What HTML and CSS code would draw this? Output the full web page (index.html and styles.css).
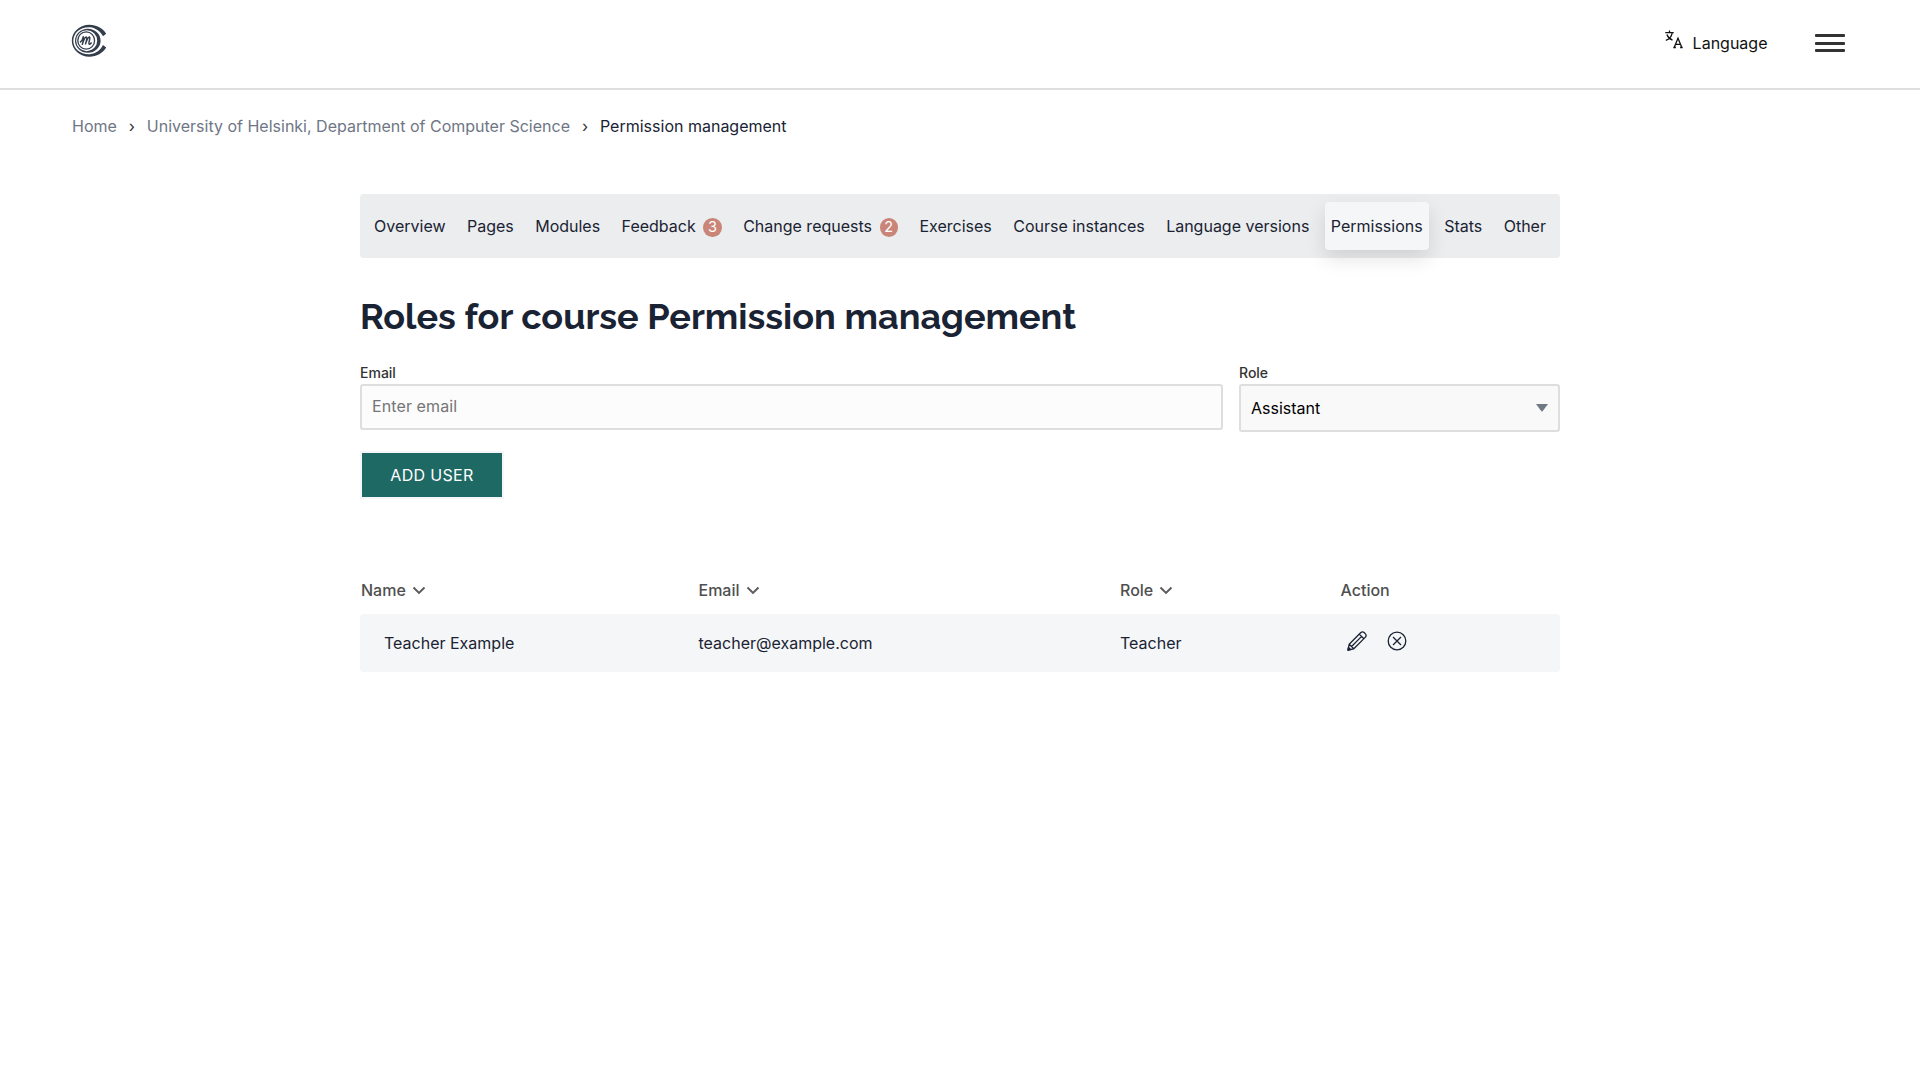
FILE: index.html
```
<!DOCTYPE html>
<html lang="en">
<head>
<meta charset="utf-8">
<title>Permission management</title>
<link rel="stylesheet" href="styles.css">
</head>
<body>
<header class="topbar">
  <a class="logo" aria-label="Home">
    <svg width="36" height="34" viewBox="0 0 36 34" fill="none" stroke="#333d4c">
      <path stroke="none" fill="#333d4c" d="M35.200 9.800C32 4.200 25.500 .7 18.500 .7C8.800 .7 .8 7.800 .8 16.700S8.800 32.700 18.500 32.700c7 0 13.500-3.500 16.700-9.100l-3.200-2.600C29.600 25.900 25 29.500 19 30.200C10 30.900 2.300 25 2.300 16.700S10 2.500 19 3.200c6 .6 10.600 4.300 13 9.100z"/>
      <path stroke="none" fill="#333d4c" fill-rule="evenodd" d="M16.800 4.700a12.800 12 0 1 0 0 24a12.800 12 0 0 0 0-24zM15.700 6.200a10.500 10.500 0 1 1 0 21a10.500 10.500 0 0 1 0-21z"/>
      <ellipse cx="15.200" cy="16.500" rx="8.400" ry="8.700" stroke-width="1.300"/>
      <path d="M9 18.400c1.500-1 2.800-3 3.300-5.500c1.300.8-.2 5-1.100 8c1.100-3.600 2.500-7.500 4-8c1.600.4-.1 5-.8 7.500c1-3.400 2.500-7.200 4-7.500c1.700.6-1.500 6.400-.2 7.200c.8.400 1.700-.6 2.400-1.600" stroke-width="1.500"/>
    </svg>
  </a>
  <div class="tools">
    <button class="language">
      <svg width="18" height="19" viewBox="0 0 18 19" fill="none" stroke="#111" stroke-width="1.300">
        <path d="M.3 2.700h8.400M4.500 .5v2.200M1.900 4.500c1 2.800 3 4.700 5.600 5.700M7.200 3c-.6 3.500-2.900 6.200-6.400 7.300"/>
        <path d="M9.300 17.300l3.700-9l3.700 9M10.500 14.300h5M8.300 17.500h2.600M15.100 17.500h2.600"/>
      </svg>
      <span>Language</span>
    </button>
    <button class="menu" aria-label="Menu"><i></i><i></i><i></i></button>
  </div>
</header>
<nav class="crumbs">
  <a>Home</a><span class="sep">›</span><a>University of Helsinki, Department of Computer Science</a><span class="sep">›</span><span class="current">Permission management</span>
</nav>
<main class="content">
  <nav class="tabs">
    <a>Overview</a><a>Pages</a><a>Modules</a>
    <a>Feedback<span class="badge">3</span></a>
    <a>Change requests<span class="badge">2</span></a>
    <a>Exercises</a><a>Course instances</a><a>Language versions</a>
    <a class="active">Permissions</a><a>Stats</a><a>Other</a>
  </nav>
  <h1>Roles for course Permission management</h1>
  <form class="form">
    <label class="field email"><span>Email</span><input type="email" placeholder="Enter email"></label>
    <div class="field role"><span>Role</span>
      <div class="select">Assistant
        <svg width="12" height="8" viewBox="0 0 12 8"><path d="M0 0h12L6.600 7.200q-.6.600-1.200 0z" fill="#707885"/></svg>
      </div>
    </div>
  </form>
  <button class="add">ADD USER</button>
  <section class="table">
    <div class="row head">
      <span>Name<svg class="chev" width="14" height="9" viewBox="0 0 14 9"><path d="M1.500 1.500L7 6.900l5.500-5.400"/></svg></span>
      <span>Email<svg class="chev" width="14" height="9" viewBox="0 0 14 9"><path d="M1.500 1.500L7 6.900l5.500-5.400"/></svg></span>
      <span>Role<svg class="chev" width="14" height="9" viewBox="0 0 14 9"><path d="M1.500 1.500L7 6.900l5.500-5.400"/></svg></span>
      <span>Action</span>
    </div>
    <div class="row item">
      <span class="name">Teacher Example</span>
      <span>teacher@example.com</span>
      <span>Teacher</span>
      <span class="actions">
        <svg width="20" height="20" viewBox="0 0 20 20" fill="none" stroke="#1a2333" stroke-width="1.300" stroke-linejoin="round">
          <path d="M1 19l1.200-5.800L13.600 1.800a2.700 2.700 0 0 1 3.800 0l.8.800a2.700 2.700 0 0 1 0 3.800L6.800 17.800zM2.200 13.200l4.600 4.600M12.300 3.100l4.600 4.600M4.600 15.500L14.600 5.400"/>
          <path d="M1 19l.5-2.500l2 2z" fill="#1a2333"/>
        </svg>
        <svg width="20" height="20" viewBox="0 0 20 20" fill="none" stroke="#1a2333" stroke-width="1.300">
          <circle cx="10" cy="10" r="8.800"/><path d="M6 6l8 8M14 6l-8 8"/>
        </svg>
      </span>
    </div>
  </section>
</main>
</body>
</html>
```
FILE: styles.css
```
* { box-sizing: border-box; }
body { margin: 0; background: #fff; color: #1a2333; font: 16px/24px Inter, "Liberation Sans", sans-serif; }
button { font: inherit; border: 0; background: none; padding: 0; color: inherit; }
svg { display: block; flex: none; }

.topbar { height: 90px; border-bottom: 2px solid #dedede; padding: 0 75px 0 71px; display: flex; justify-content: space-between; align-items: flex-start; }
.logo { padding-top: 24px; }
.tools { display: flex; align-items: flex-start; gap: 47.500px; padding-top: 31px; }
.language { display: flex; gap: 9.500px; color: #111; }
.language svg { margin-top: -1px; }
.menu { width: 30px; height: 18px; display: flex; flex-direction: column; justify-content: space-between; margin-top: 3px; }
.menu i { height: 3px; background: #333; border-radius: 1px; }

.crumbs { display: flex; padding: 24px 72px 0; height: 104px; color: #6f7685; }
.sep { width: 30px; text-align: center; color: #333; }
.current { color: #1a2333; }

.content { width: 1200px; margin: 0 auto; }
.tabs { height: 64px; padding: 8px; border-radius: 4px; background: #ebedee; display: flex; justify-content: space-between; }
.tabs a { display: flex; align-items: center; padding: 0 6px; border-radius: 4px; white-space: nowrap; }
.tabs .active { background: #f5f6f7; box-shadow: 0 8px 20px rgba(0, 0, 0, .12); }
.badge { width: 18.500px; height: 19px; margin: 2px 0 0 7.500px; border-radius: 50%; background: #c98578; color: #fff; font-size: 14.500px; line-height: 18px; text-align: center; }

h1 { margin: 35px 0 0; font: 700 36px/46px Raleway, Lato, sans-serif; white-space: nowrap; }

.form { display: flex; gap: 16px; margin-top: 23px; }
.field { display: flex; flex-direction: column; font-size: 14px; line-height: 21px; font-weight: 500; color: #333; }
.field > span { margin-bottom: 1px; }
.email { width: 863px; }
.role { flex: 1; }
.field input, .select { border: 2px solid #dedede; border-radius: 3px; font: 16px/24px Inter, "Liberation Sans", sans-serif; }
.field input { height: 46px; padding: 0 10px 2px; background: #fcfcfc; letter-spacing: .1px; }
.field input::placeholder { color: #757575; opacity: 1; }
.select { height: 48px; padding: 0 10px; background: #f9f9f9; color: #000; display: flex; align-items: center; justify-content: space-between; }

.add { display: block; width: 144px; height: 48px; margin-top: 19px; border: 2px solid #f5f6f7; background: #1f6964; background-clip: padding-box; color: #fff; letter-spacing: .32px; }

.table { margin-top: 79px; }
.row { display: grid; grid-template-columns: 338.500px 421.500px 220.500px 1fr; align-items: center; }
.head { height: 36px; padding-bottom: 12px; font-weight: 500; color: #4f4f4f; }
.head span { display: flex; align-items: center; }
.head span:first-child { padding-left: 1px; }
.chev { margin: 1px 0 0 6px; fill: none; stroke: #5c5c5c; stroke-width: 2; }
.item { height: 58px; background: #f5f6f7; border-radius: 4px; }
.name { padding-left: 24px; }
.actions { display: flex; gap: 20px; padding: 0 0 4px 6.500px; }
```
